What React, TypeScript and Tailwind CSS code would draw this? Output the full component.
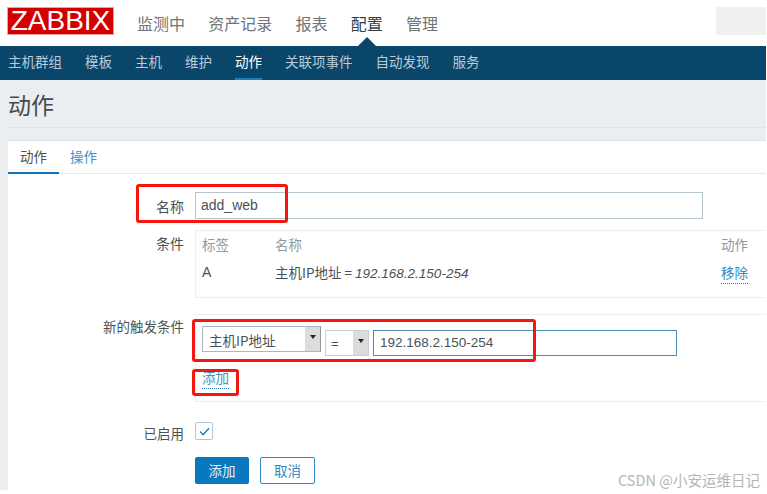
const font = "font-['Noto_Sans_CJK_SC','Noto_Sans',sans-serif]";

const mainNav = [
  { label: "监测中", active: false },
  { label: "资产记录", active: false },
  { label: "报表", active: false },
  { label: "配置", active: true },
  { label: "管理", active: false },
];

const subNav = ["主机群组", "模板", "主机", "维护", "动作", "关联项事件", "自动发现", "服务"];

const RedBox = ({ className }: { className: string }) => (
  <div className={`absolute border-[3px] border-[#f5170f] rounded-[3px] ${className}`} />
);

const SelectArrow = ({ className }: { className: string }) => (
  <span className={`flex items-start justify-center pt-[8px] bg-[#dcdcdc] ${className}`}>
    <span className="w-0 h-0 border-x-[3px] border-x-transparent border-t-[4px] border-t-[#222]" />
  </span>
);

const App = () => {
  return (
    <div className={`relative w-[767px] h-[494px] overflow-hidden bg-white text-[#4a5257] ${font}`}>
      <header className="flex h-[46px] items-start pl-[7px] pr-[1px]">
        <div className="mt-[7px] flex h-[28px] w-[107px] items-center justify-center border border-[#f0a0a0] bg-[#d40000] font-['Liberation_Sans',sans-serif] text-[28px] leading-none text-white">
          ZABBIX
        </div>
        <nav className="ml-[23px] flex gap-[23.25px] pt-[11px]">
          {mainNav.map((item) => (
            <div key={item.label} className="relative">
              <span className={`text-[16px] leading-[22px] ${item.active ? "text-[#383f44]" : "text-[#6d7579]"}`}>
                {item.label}
              </span>
              {item.active && (
                <span className="absolute left-[7px] top-[26px] h-0 w-0 border-x-[9px] border-b-[9px] border-x-transparent border-b-[#0a466a]" />
              )}
            </div>
          ))}
        </nav>
        <div className="ml-auto mt-[7px] h-[28px] w-[50px] bg-[#f0f0f0]" />
      </header>

      <nav className="flex h-[34px] w-[766px] items-start gap-[23px] bg-[#0a466a] pl-[8px] pt-[5px]">
        {subNav.map((item) => (
          <div
            key={item}
            className={`h-[29px] text-[13.5px] leading-[20px] ${
              item === "动作" ? "border-b-[2px] border-[#1d7fc0] text-white" : "text-[#b9ccd8]"
            }`}
          >
            {item}
          </div>
        ))}
      </nav>

      <main className="h-[410px] w-[766px] bg-[#ebeef0] pl-[8px]">
        <div className="h-[48px] border-b border-[#e2e5e7] pt-[8px]">
          <h1 className="text-[23px] font-normal leading-[32px] text-[#444b50]">动作</h1>
        </div>

        <section className="mt-[12px] h-[350px] border-t border-[#e0e4e6] bg-white">
          <div className="flex h-[33px] border-b border-[#e6eaec]">
            <div className="h-[33px] w-[51px] border-b-[2px] border-[#0f75b8] text-center text-[13.5px] leading-[30px] text-[#4a5257]">
              动作
            </div>
            <div className="ml-[11px] text-[13.5px] leading-[30px] text-[#3f94c9]">操作</div>
          </div>

          <div className="pt-[18px] text-[13.5px]">
            <div className="flex items-center">
              <label className="w-[187px] pr-[11px] text-right text-[14px] leading-[26px]">名称</label>
              <div className="h-[27px] w-[508px] border border-[#b5c5cd] pl-[5px] font-['Liberation_Sans',sans-serif] text-[14px] leading-[25px]">
                add_web
              </div>
            </div>

            <div className="mt-[11px] flex">
              <label className="w-[187px] pr-[11px] pt-[1px] text-right text-[14px] leading-[24px]">条件</label>
              <div className="h-[68px] flex-1 border border-r-0 border-[#eceff1] pl-[6px] pt-[3px]">
                <div className="flex text-[#8e9aa1]">
                  <span className="w-[73px] leading-[20px]">标签</span>
                  <span className="w-[446px] leading-[20px]">名称</span>
                  <span className="leading-[20px]">动作</span>
                </div>
                <div className="mt-[8px] flex">
                  <span className="w-[73px] font-['Liberation_Sans',sans-serif] text-[14px] leading-[20px]">A</span>
                  <span className="w-[446px] leading-[20px]">
                    主机IP地址 = <i className="font-['Liberation_Sans',sans-serif] text-[13.5px]">192.168.2.150-254</i>
                  </span>
                  <span className="border-b border-dotted border-[#1d7fc0] leading-[20px] text-[#2f8ac4]">移除</span>
                </div>
              </div>
            </div>

            <div className="mt-[16px] flex">
              <label className="w-[187px] pr-[11px] text-right leading-[24px]">新的触发条件</label>
              <div className="h-[88px] flex-1 border-y border-l border-[#eceff1] pl-[6px] pt-[11px]">
                <div className="flex items-start">
                  <div className="flex h-[26px] w-[119px] items-stretch border border-[#a9b8c0] border-r-[#8f9a9f] pl-[6px] leading-[27px]">
                    <span className="flex-1">主机IP地址</span>
                    <SelectArrow className="w-[15px]" />
                  </div>
                  <div className="ml-[4px] mt-[4px] flex h-[26px] w-[44px] items-stretch border border-[#c9cfd2] pl-[5px] leading-[24px]">
                    <span className="flex-1">=</span>
                    <SelectArrow className="w-[15px]" />
                  </div>
                  <div className="ml-[4px] mt-[4px] h-[26px] w-[304px] border border-[#4d8db5] pl-[6px] font-['Liberation_Sans',sans-serif] text-[13.5px] leading-[24px]">
                    192.168.2.150-254
                  </div>
                </div>
                <div className="mt-[11px] w-fit border-b border-dotted border-[#1d7fc0] pb-[1px] leading-[20px] text-[#3f94c9]">
                  添加
                </div>
              </div>
            </div>

            <div className="mt-[20px] flex items-start">
              <label className="w-[187px] pr-[11px] text-right leading-[22px]">已启用</label>
              <div className="flex h-[18px] w-[18px] items-center justify-center rounded-[2px] border border-[#b5c5cd]">
                <svg viewBox="0 0 12 10" className="h-[9px] w-[11px]" fill="none" stroke="#1f7fbf" strokeWidth="1.6">
                  <path d="M1 5l3.5 3.5L11 1.5" />
                </svg>
              </div>
            </div>

            <div className="ml-[187px] mt-[13px] flex gap-[11px]">
              <button className="h-[27px] w-[54px] rounded-[2px] bg-[#0a78bd] text-[13.5px] text-[#e6f1f8]">添加</button>
              <button className="h-[27px] w-[55px] rounded-[2px] border border-[#2f8ac4] text-[13.5px] text-[#2f8ac4]">取消</button>
            </div>
          </div>
        </section>
      </main>

      <RedBox className="left-[136px] top-[184px] h-[39px] w-[152px]" />
      <RedBox className="left-[192px] top-[319px] h-[43px] w-[344px]" />
      <RedBox className="left-[192px] top-[369px] h-[27px] w-[47px]" />

      <div className="absolute left-[618px] top-[470px] text-[14.5px] leading-[20px] text-[#b5b5b5]">CSDN @小安运维日记</div>
    </div>
  );
};

export default App;
